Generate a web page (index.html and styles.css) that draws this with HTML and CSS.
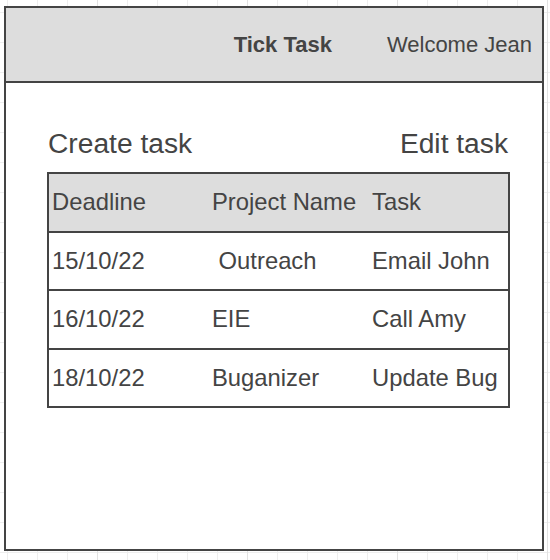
FILE: index.html
```html
<!DOCTYPE html>
<html lang="en">
<head>
<meta charset="utf-8">
<title>Tick Task</title>
<link rel="stylesheet" href="styles.css">
</head>
<body>
<div class="frame">
  <header class="topbar">
    <span class="brand">Tick Task</span>
    <span class="welcome">Welcome Jean</span>
  </header>
  <main class="content">
    <div class="actions">
      <span class="action">Create task</span>
      <span class="action">Edit task</span>
    </div>
    <div class="tasks">
      <div class="row head">
        <div class="cell">Deadline</div>
        <div class="cell">Project Name</div>
        <div class="cell">Task</div>
      </div>
      <div class="row">
        <div class="cell">15/10/22</div>
        <div class="cell">&nbsp;Outreach</div>
        <div class="cell">Email John</div>
      </div>
      <div class="row">
        <div class="cell">16/10/22</div>
        <div class="cell">EIE</div>
        <div class="cell">Call Amy</div>
      </div>
      <div class="row">
        <div class="cell">18/10/22</div>
        <div class="cell">Buganizer</div>
        <div class="cell">Update Bug</div>
      </div>
    </div>
  </main>
</div>
</body>
</html>
```
FILE: styles.css
```css
html, body {
  margin: 0;
  padding: 0;
}

body {
  min-height: 560px;
  font-family: "Liberation Sans", Arial, Helvetica, sans-serif;
  color: #444444;
  background-color: #ffffff;
  background-image:
    linear-gradient(to right, #e2e2e2 1px, transparent 1px),
    linear-gradient(to right, #eeeeee 1px, transparent 1px),
    linear-gradient(to bottom, #eeeeee 1px, transparent 1px);
  background-size: 150px 150px, 30px 30px, 30px 30px;
  background-position: 97px 0, 7px 0, 0 12px;
  padding-top: 6px;
  padding-left: 4px;
  box-sizing: border-box;
}

.frame {
  box-sizing: border-box;
  width: 540px;
  height: 545px;
  border: 2px solid #444444;
  background: #ffffff;
  display: flex;
  flex-direction: column;
}

.topbar {
  box-sizing: border-box;
  height: 75px;
  background: #dddddd;
  border-bottom: 2px solid #444444;
  display: flex;
  align-items: center;
  justify-content: flex-end;
  gap: 55px;
  padding-right: 10px;
  font-size: 22px;
}

.brand {
  font-weight: bold;
}

.content {
  padding: 44px 32px 0 41px;
}

.actions {
  display: flex;
  justify-content: space-between;
  align-items: center;
  height: 32px;
  font-size: 28.2px;
  padding: 0 2px 0 1px;
  margin-bottom: 13px;
}

.tasks {
  border: 2px solid #444444;
  border-bottom: none;
  font-size: 23.8px;
}

.row {
  box-sizing: border-box;
  height: 58.5px;
  border-bottom: 2px solid #444444;
  display: grid;
  grid-template-columns: 160px 160px 1fr;
  align-items: center;
}

.row.head {
  background: #dddddd;
}

.cell {
  padding-left: 3px;
  white-space: nowrap;
}
```
